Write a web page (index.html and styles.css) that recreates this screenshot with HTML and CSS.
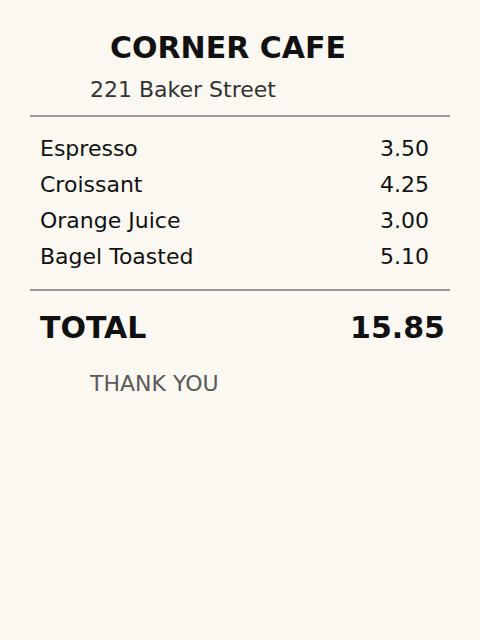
FILE: index.html
```html
<!DOCTYPE html>
<html lang="en">
<head>
    <meta charset="UTF-8">
    <meta name="viewport" content="width=device-width, initial-scale=1.0">
    <title>Corner Cafe Receipt</title>
    <link rel="stylesheet" href="styles.css">
</head>
<body>

    <div class="receipt">
        <h1 class="shop-name">CORNER CAFE</h1>
        <p class="address">221 Baker Street</p>

        <hr class="divider">

        <!-- Items -->
        <ul class="items">
            <li class="item"><span>Espresso</span><span>3.50</span></li>
            <li class="item"><span>Croissant</span><span>4.25</span></li>
            <li class="item"><span>Orange Juice</span><span>3.00</span></li>
            <li class="item"><span>Bagel Toasted</span><span>5.10</span></li>
        </ul>

        <hr class="divider divider-bottom">

        <div class="total">
            <span>TOTAL</span>
            <span>15.85</span>
        </div>

        <p class="thanks">THANK YOU</p>
    </div>

</body>
</html>
```

FILE: styles.css
```css
* {
    margin: 0;
    padding: 0;
    box-sizing: border-box;
}

body {
    font-family: 'DejaVu Sans', Verdana, sans-serif;
    background-color: #fbf8f2;
    color: #111111;
}

.receipt {
    padding: 30px 30px 0;
}

.shop-name {
    font-size: 30px;
    line-height: 36px;
    font-weight: bold;
    margin-left: 80px;
}

.address {
    font-size: 22px;
    line-height: 28px;
    color: #333333;
    margin-top: 10px;
    margin-left: 60px;
}

.divider {
    border: none;
    height: 2px;
    background-color: #999999;
    margin-top: 11px;
}

.items {
    list-style: none;
    margin-top: 14px;
    padding: 0 21px 0 10px;
}

.item {
    display: flex;
    justify-content: space-between;
    font-size: 22px;
    line-height: 36px;
}

.divider-bottom {
    margin-top: 14px;
}

.total {
    display: flex;
    justify-content: space-between;
    font-size: 30px;
    line-height: 36px;
    font-weight: bold;
    margin-top: 19px;
    padding: 0 5px 0 10px;
}

.thanks {
    font-size: 22px;
    line-height: 28px;
    color: #5a5a5a;
    margin-top: 24px;
    margin-left: 60px;
}
```
